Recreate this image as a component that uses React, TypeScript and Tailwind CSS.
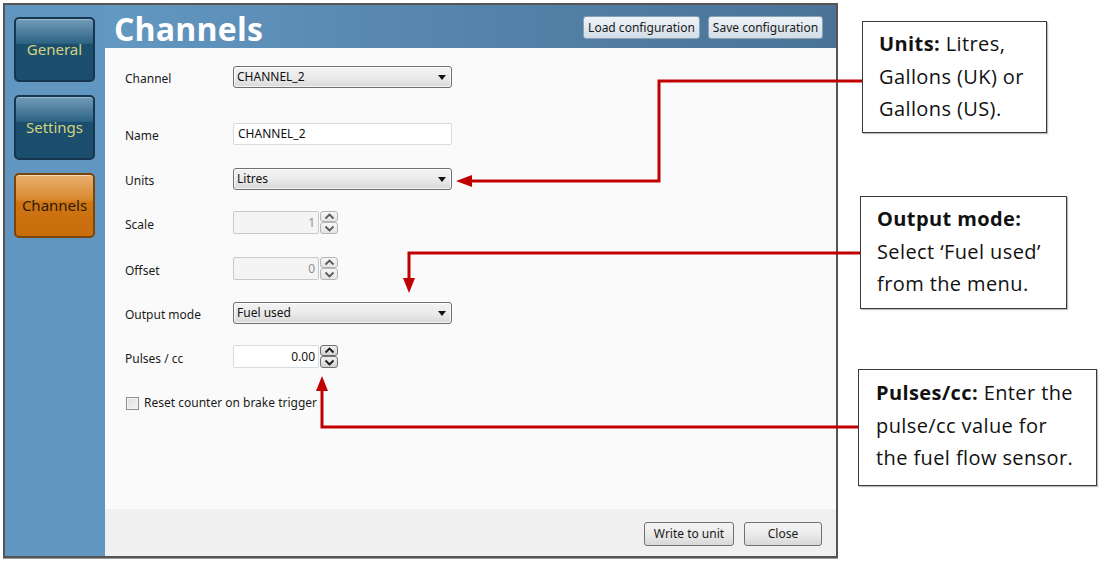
import React from "react";

const ui = { fontFamily: '"Noto Sans", "Open Sans", sans-serif' };
const callFont = { fontFamily: '"Open Sans", "Noto Sans", sans-serif' };

function SideButton({ label, active }: { label: string; active?: boolean }) {
  return active ? (
    <div className="w-[81px] h-[65px] rounded-[5px] border-2 border-[#7a4508] bg-[linear-gradient(to_bottom,#eab070_0%,#d98a30_40%,#cf7512_45%,#c86d0c_100%)] flex items-center justify-center shadow-[inset_0_1px_0_rgba(255,255,255,0.5)]">
      <span className="text-[15px] text-[#2a1c08]" style={ui}>{label}</span>
    </div>
  ) : (
    <div className="w-[81px] h-[65px] rounded-[5px] border-2 border-[#163650] bg-[linear-gradient(to_bottom,#729cb8_0%,#2d6384_40%,#1c4f6e_41%,#1b4e6d_100%)] flex items-center justify-center shadow-[inset_0_1px_0_rgba(255,255,255,0.3)]">
      <span className="text-[15px] text-[#d4d27e]" style={ui}>{label}</span>
    </div>
  );
}

function Arrow() {
  return (
    <svg width="8" height="5" viewBox="0 0 8 5">
      <polygon points="0,0 8,0 4,5" fill="#111" />
    </svg>
  );
}

function Select({ value }: { value: string }) {
  return (
    <div className="w-[219px] h-[22px] rounded-[3px] border border-[#707070] bg-gradient-to-b from-[#f3f3f3] via-[#ebebeb] to-[#d9d9d9] flex items-center justify-between pl-[3px] pr-[5px] shadow-[inset_0_0_0_1px_rgba(255,255,255,0.7)]">
      <span className="text-[12px] text-[#111]" style={ui}>{value}</span>
      <Arrow />
    </div>
  );
}

function Chevron({ up, color }: { up?: boolean; color: string }) {
  return (
    <svg width="11" height="7" viewBox="0 0 11 7">
      <polyline
        points={up ? "1.5,5.5 5.5,1.5 9.5,5.5" : "1.5,1.5 5.5,5.5 9.5,1.5"}
        fill="none"
        stroke={color}
        strokeWidth="1.8"
      />
    </svg>
  );
}

function Spinner({ value, disabled }: { value: string; disabled?: boolean }) {
  const btn = disabled
    ? "border-[#b5b5b5] bg-gradient-to-b from-[#f7f7f7] to-[#e4e4e4]"
    : "border-[#707070] bg-gradient-to-b from-[#f0f0f0] to-[#d2d2d2]";
  const col = disabled ? "#5a5a5a" : "#1a1a1a";
  return (
    <div className="flex items-center h-[23px]">
      <div
        className={`w-[86px] h-[23px] border flex items-center justify-end pr-[3px] ${
          disabled ? "bg-[#f4f4f4] border-[#c9c9c9] rounded-[2px]" : "bg-white border-[#d5dbe2] rounded-[2px]"
        }`}
      >
        <span className={`text-[12px] ${disabled ? "text-[#8d8d8d]" : "text-[#111]"}`} style={ui}>
          {value}
        </span>
      </div>
      <div className="flex flex-col ml-[1px] w-[18px]">
        <div className={`h-[11px] border rounded-[3px] flex items-center justify-center ${btn}`}>
          <Chevron up color={col} />
        </div>
        <div className={`h-[12px] border rounded-[3px] flex items-center justify-center ${btn}`}>
          <Chevron color={col} />
        </div>
      </div>
    </div>
  );
}

function Row({ label, mt, children }: { label: string; mt: string; children: React.ReactNode }) {
  return (
    <div className={`flex items-center ${mt}`}>
      <div className="w-[108px] text-[12px] text-[#1a1a1a] pt-[4px]" style={ui}>
        {label}
      </div>
      {children}
    </div>
  );
}

function Callout({
  cls,
  children,
}: {
  cls: string;
  children: React.ReactNode;
}) {
  return (
    <div
      className={`border border-[#3a3a3a] bg-white shadow-[1px_1px_1px_rgba(0,0,0,0.25)] text-[20px] tracking-[0.4px] leading-[32.5px] text-[#111] ${cls}`}
      style={callFont}
    >
      {children}
    </div>
  );
}

export default function App() {
  return (
    <div className="relative w-[1100px] h-[561px] bg-white flex overflow-hidden">
      {/* Window */}
      <div className="ml-[3px] mt-[3px] w-[835px] h-[555px] border-2 border-[#555] bg-[#6096bf] flex shadow-[0_1px_0_#9a9a9a]">
        {/* Sidebar */}
        <div className="w-[100px] flex flex-col pl-[9px] pt-[12px] gap-[13px]">
          <SideButton label="General" />
          <SideButton label="Settings" />
          <SideButton label="Channels" active />
        </div>
        {/* Main */}
        <div className="flex-1 flex flex-col">
          <div className="h-[43px] flex items-start justify-between bg-gradient-to-r from-[#6398c1] via-[#5583ab] to-[#4a7397] pl-[9px] pr-[13px]">
            <div
              className="text-[32px] font-bold text-white leading-none mt-[8px] tracking-[0.2px]"
              style={{ fontFamily: '"Open Sans", "Noto Sans", sans-serif' }}
            >
              Channels
            </div>
            <div className="flex gap-[8px] mt-[11px]">
              <div className="w-[117px] h-[23px] rounded-[3px] border border-[#8aa0b3] bg-gradient-to-b from-[#eef3f8] to-[#d3dee8] flex items-center justify-center text-[12px] text-[#1a1a1a]" style={ui}>
                Load configuration
              </div>
              <div className="w-[115px] h-[23px] rounded-[3px] border border-[#8aa0b3] bg-gradient-to-b from-[#eef3f8] to-[#d3dee8] flex items-center justify-center text-[12px] text-[#1a1a1a]" style={ui}>
                Save configuration
              </div>
            </div>
          </div>
          {/* Content */}
          <div className="h-[461px] bg-[#fafafa] flex flex-col pl-[20px]">
            <Row label="Channel" mt="mt-[18px]">
              <Select value="CHANNEL_2" />
            </Row>
            <Row label="Name" mt="mt-[35px]">
              <div className="w-[219px] h-[22px] border border-[#d5dbe2] bg-white flex items-center pl-[4px] rounded-[2px]">
                <span className="text-[12px] text-[#111]" style={ui}>CHANNEL_2</span>
              </div>
            </Row>
            <Row label="Units" mt="mt-[23px]">
              <Select value="Litres" />
            </Row>
            <Row label="Scale" mt="mt-[21px]">
              <Spinner value="1" disabled />
            </Row>
            <Row label="Offset" mt="mt-[23px]">
              <Spinner value="0" disabled />
            </Row>
            <Row label="Output mode" mt="mt-[22px]">
              <Select value="Fuel used" />
            </Row>
            <Row label="Pulses / cc" mt="mt-[21px]">
              <Spinner value="0.00" />
            </Row>
            <div className="flex items-center mt-[26px] ml-[1px]">
              <div className="w-[13px] h-[13px] border border-[#8e8f8f] bg-gradient-to-br from-[#dcdcdc] to-[#f6f6f6] shadow-[inset_0_0_0_1px_#f4f4f4]" />
              <span className="ml-[5px] text-[12px] text-[#1a1a1a]" style={ui}>
                Reset counter on brake trigger
              </span>
            </div>
          </div>
          {/* Footer */}
          <div className="flex-1 bg-[#f0f0f0] flex justify-end items-start pt-[13px] pr-[14px] gap-[10px]">
            <div className="w-[90px] h-[24px] rounded-[3px] border border-[#707070] bg-gradient-to-b from-[#f4f4f4] via-[#ebebeb] to-[#d8d8d8] flex items-center justify-center text-[12px] text-[#1a1a1a]" style={ui}>
              Write to unit
            </div>
            <div className="w-[78px] h-[24px] rounded-[3px] border border-[#707070] bg-gradient-to-b from-[#f4f4f4] via-[#ebebeb] to-[#d8d8d8] flex items-center justify-center text-[12px] text-[#1a1a1a]" style={ui}>
              Close
            </div>
          </div>
        </div>
      </div>

      {/* Callouts */}
      <div className="flex flex-col">
        <Callout cls="ml-[24px] mt-[21px] w-[185px] h-[112px] pl-[16px] pt-[6px]">
          <div>
            <b>Units:</b> Litres,
          </div>
          <div>Gallons (UK) or</div>
          <div>Gallons (US).</div>
        </Callout>
        <Callout cls="ml-[22px] mt-[63px] w-[207px] h-[113px] pl-[16px] pt-[6px]">
          <div>
            <b>Output mode:</b>
          </div>
          <div>Select ‘Fuel used’</div>
          <div>from the menu.</div>
        </Callout>
        <Callout cls="ml-[20px] mt-[60px] w-[239px] h-[117px] pl-[17px] pt-[7px]">
          <div>
            <b>Pulses/cc:</b> Enter the
          </div>
          <div>pulse/cc value for</div>
          <div>the fuel flow sensor.</div>
        </Callout>
      </div>

      {/* Arrows overlay */}
      <svg className="absolute inset-0 pointer-events-none" width="1100" height="561" viewBox="0 0 1100 561">
        <polyline points="862,81 659,81 659,181 470,181" fill="none" stroke="#c00000" strokeWidth="3" />
        <polygon points="456,181 472,175 472,187" fill="#c00000" />
        <polyline points="860,253 409,253 409,279" fill="none" stroke="#c00000" strokeWidth="3" />
        <polygon points="409,293 403,278 415,278" fill="#c00000" />
        <polyline points="858,427 322,427 322,390" fill="none" stroke="#c00000" strokeWidth="3" />
        <polygon points="322,376 316,391 328,391" fill="#c00000" />
      </svg>
    </div>
  );
}
